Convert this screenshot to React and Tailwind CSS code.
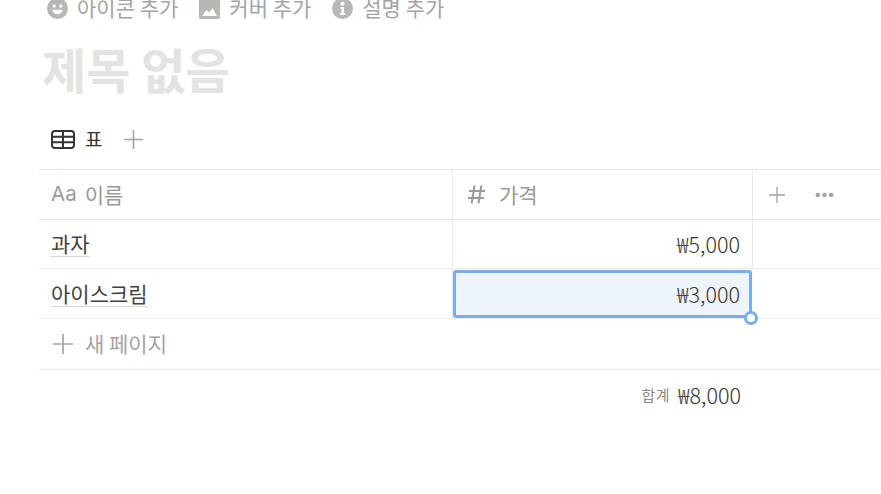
const font = { fontFamily: '"Noto Sans CJK KR", sans-serif' }

function Smile() {
  return (
    <svg viewBox="0 0 20 20" className="h-[21px] w-[21px]">
      <circle cx="10" cy="10" r="10" fill="#b8b7b4" />
      <circle cx="6.8" cy="7.6" r="1.6" fill="#fff" />
      <circle cx="13.2" cy="7.6" r="1.6" fill="#fff" />
      <path d="M4.8 11.2c1 3 3 4.3 5.2 4.3s4.2-1.3 5.2-4.3z" fill="#fff" />
    </svg>
  )
}

function Cover() {
  return (
    <svg viewBox="0 0 21 21" className="h-[21px] w-[21px]">
      <rect width="21" height="21" rx="2" fill="#b8b7b4" />
      <path d="M3 18l4.5-6 2.7 2.6 3.3-4.6L18 18z" fill="#fff" />
    </svg>
  )
}

function Info() {
  return (
    <svg viewBox="0 0 20 20" className="h-[21px] w-[21px]">
      <circle cx="10" cy="10" r="10" fill="#b8b7b4" />
      <circle cx="10" cy="5.4" r="1.9" fill="#fff" />
      <path d="M7.8 8.6h3.6v6h1.2v1.6H7.6v-1.6h1.4v-4.4H7.8z" fill="#fff" />
    </svg>
  )
}

function TableIcon() {
  return (
    <svg viewBox="0 0 24 19" fill="none" stroke="#37352f" strokeWidth="2" className="h-[19px] w-[24px]">
      <rect x="1" y="1" width="22" height="17" rx="3" />
      <path d="M1 6.8h22M1 12.2h22M12 1v17" />
    </svg>
  )
}

function PlusIcon({ className }) {
  return (
    <svg viewBox="0 0 20 20" fill="none" stroke="currentColor" strokeWidth="1.7" className={className}>
      <path d="M0 10h20M10 0v20" />
    </svg>
  )
}

function HashIcon() {
  return (
    <svg viewBox="0 0 17 19" fill="none" stroke="#9b9a97" strokeWidth="2" className="h-[19px] w-[17px]">
      <path d="M6.6 0.5L3.6 18.5M13.4 0.5L10.4 18.5M1 6h16M0 13h16" />
    </svg>
  )
}

function ToolbarItem({ icon, label }) {
  return (
    <div className="flex items-center gap-[9px]">
      {icon}
      <span>{label}</span>
    </div>
  )
}

function Row({ name, price, selected, className }) {
  return (
    <div className={`flex border-b border-[#ebebea] ${className}`}>
      <div className="flex w-[414px] items-center border-r border-[#ebebea] pl-3">
        <span className="border-b border-[#d9d8d5] leading-[25px] text-[#45433e]">{name}</span>
      </div>
      {selected ? (
        <div className="relative mt-px flex w-[299px] items-center justify-end rounded-[3px] border-[3px] border-[#74b0ea] bg-[#edf4fc] pr-[9px] text-[21.5px] font-light">
          {price}
          <span className="absolute -right-[9px] -bottom-[10px] h-[14px] w-[14px] rounded-full border-[3px] border-[#74b0ea] bg-white" />
        </div>
      ) : (
        <div className="flex w-[300px] items-center justify-end border-r border-[#ebebea] pr-3 text-[21.5px] font-light">{price}</div>
      )}
    </div>
  )
}

export default function App() {
  return (
    <div className="h-[494px] w-[881px] overflow-hidden bg-white text-[21px] text-[#37352f]" style={font}>
      <div className="-mt-[5px] flex h-[26px] items-center gap-[21px] pl-[47px] text-[#a5a4a1]">
        <ToolbarItem icon={<Smile />} label="아이콘 추가" />
        <ToolbarItem icon={<Cover />} label="커버 추가" />
        <ToolbarItem icon={<Info />} label="설명 추가" />
      </div>
      <h1 className="mt-[18px] pl-[42px] text-[48px] leading-[58px] font-bold text-[#e3e3e1]">제목 없음</h1>
      <div className="mt-[26px] flex h-[33px] items-center pl-[51px]">
        <TableIcon />
        <span className="ml-[10px] text-[19px]">표</span>
        <PlusIcon className="ml-[22px] h-[19px] w-[19px] text-[#a5a4a1]" />
      </div>

      <div className="mt-[13px] ml-[39px] border-t border-[#e4e4e2]">
        <div className="flex h-[50px] border-b border-[#e4e4e2] text-[#9b9a97]">
          <div className="flex w-[414px] items-center border-r border-[#ebebea] pl-3">
            <span className="text-[20.5px]" style={{ fontFamily: 'Inter, sans-serif' }}>Aa</span>
            <span className="ml-[8px]">이름</span>
          </div>
          <div className="flex w-[300px] items-center border-r border-[#ebebea] pl-[15px]">
            <HashIcon />
            <span className="ml-[14px]">가격</span>
          </div>
          <div className="flex items-center pl-[16px] text-[#a5a4a1]">
            <PlusIcon className="h-[16px] w-[16px]" />
            <svg viewBox="0 0 20 6" className="ml-[30px] h-[6px] w-[19px]" fill="#a5a4a1">
              <circle cx="3" cy="3" r="2.4" />
              <circle cx="10" cy="3" r="2.4" />
              <circle cx="17" cy="3" r="2.4" />
            </svg>
          </div>
        </div>
        <Row name="과자" price="₩5,000" className="h-[49px]" />
        <Row name="아이스크림" price="₩3,000" selected className="h-[50px]" />
        <div className="flex h-[51px] items-center border-b border-[#e8e8e6] pl-[14px] text-[#a5a4a1]">
          <PlusIcon className="h-[20px] w-[20px]" />
          <span className="ml-[12px]">새 페이지</span>
        </div>
        <div className="flex h-[50px] w-[702px] items-center justify-end">
          <span className="mr-[8px] text-[15px] tracking-[0.5px] text-[#8b8a86]">합계</span>
          <span className="text-[21.5px] font-light">₩8,000</span>
        </div>
      </div>
    </div>
  )
}
